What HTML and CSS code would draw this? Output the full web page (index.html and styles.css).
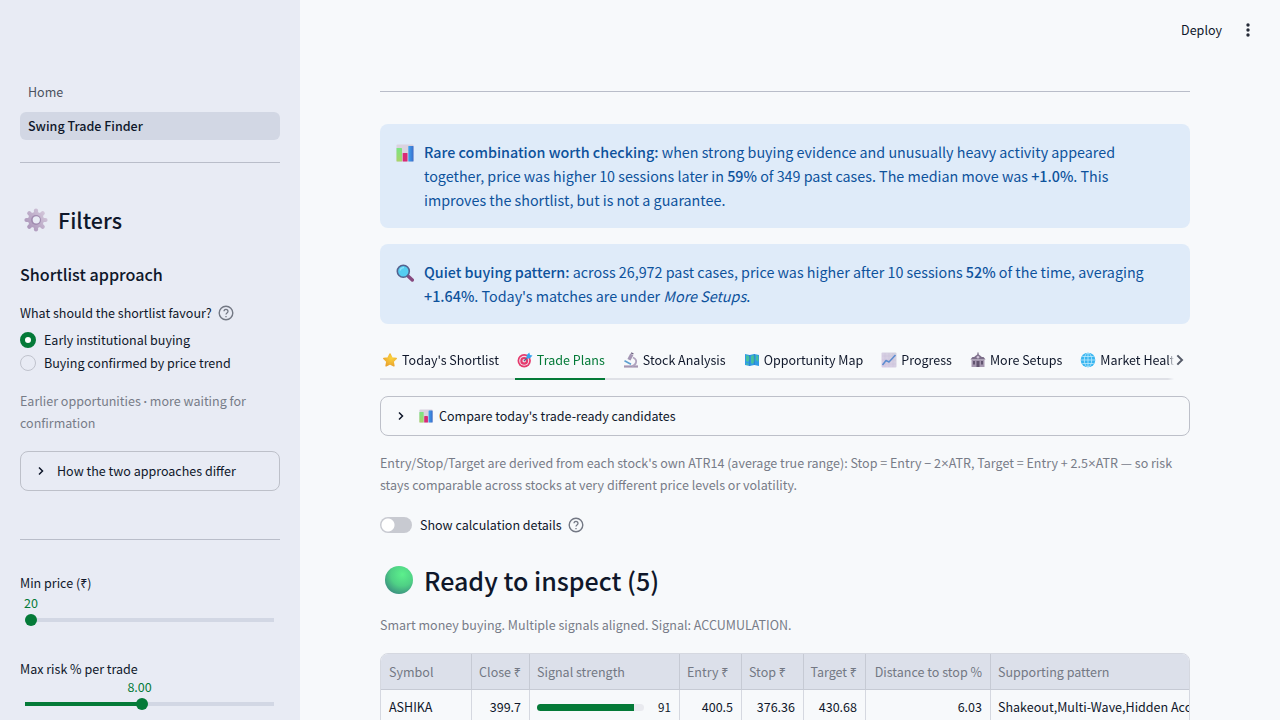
FILE: index.html
```html
<!DOCTYPE html>
<html lang="en">
<head>
<meta charset="utf-8">
<meta name="viewport" content="width=device-width, initial-scale=1">
<title>Swing Trade Finder</title>
<link rel="stylesheet" href="styles.css">
</head>
<body>
<svg class="defs" aria-hidden="true">
  <defs>
    <linearGradient id="bar-g" x1="0" y1="0" x2="0" y2="1"><stop offset="0" stop-color="#7ae582"/><stop offset="1" stop-color="#a9d46a"/></linearGradient>
    <linearGradient id="bar-b" x1="0" y1="0" x2="1" y2="0"><stop offset="0" stop-color="#3fa2f2"/><stop offset="1" stop-color="#3a6cc9"/></linearGradient>
    <radialGradient id="ball" cx=".62" cy=".3" r=".75"><stop offset="0" stop-color="#5cf08c"/><stop offset=".55" stop-color="#4fd085"/><stop offset="1" stop-color="#3b8f80"/></radialGradient>
    <radialGradient id="star-y" cx=".6" cy=".35" r=".7"><stop offset="0" stop-color="#fbd23c"/><stop offset="1" stop-color="#e9a32f"/></radialGradient>
    <linearGradient id="gear-p" gradientUnits="userSpaceOnUse" x1="2" y1="20" x2="21" y2="4"><stop offset="0" stop-color="#a993b8"/><stop offset="1" stop-color="#d3c7da"/></linearGradient>
    <linearGradient id="paper" x1="0" y1="1" x2="1" y2="0"><stop offset="0" stop-color="#d9cbe6"/><stop offset="1" stop-color="#d3d3df"/></linearGradient>
  </defs>
  <symbol id="chart" viewBox="0 0 18 18">
    <rect x=".5" y=".5" width="17" height="17" rx="1" fill="#dad2df"/>
    <rect x=".5" y="4" width="5.500" height="13.500" rx=".6" fill="url(#bar-g)"/>
    <rect x="6.700" y="9" width="4.800" height="8.500" rx=".6" fill="#d82a75"/>
    <rect x="12.300" y="2" width="5.200" height="15.500" rx=".6" fill="url(#bar-b)"/>
  </symbol>
  <symbol id="glass" viewBox="0 0 18 18">
    <path d="M12 12l4.300 4" stroke="#87497f" stroke-width="3.400" stroke-linecap="round"/>
    <circle cx="7.300" cy="7.300" r="6" fill="#55cdf1" stroke="#55628f" stroke-width="1.600"/>
    <path d="M4 6.500Q5 3.600 8 3.700" stroke="#8ce3fa" stroke-width="1.200" fill="none"/>
  </symbol>
  <symbol id="star" viewBox="0 0 16 16">
    <path d="M8 2l1.900 3.900 4.300.6-3.100 3 .8 4.300L8 11.800l-3.900 2 .8-4.300-3.100-3 4.300-.6z" fill="url(#star-y)" stroke="url(#star-y)" stroke-width="1.500" stroke-linejoin="round"/>
  </symbol>
  <symbol id="target" viewBox="0 0 16 16">
    <circle cx="7.200" cy="8.800" r="6.700" fill="#e5396c"/>
    <circle cx="7.200" cy="8.800" r="5" fill="#f0dfe9"/>
    <circle cx="7.200" cy="8.800" r="3.900" fill="#e5396c"/>
    <circle cx="7.200" cy="8.800" r="1.800" fill="#f0dfe9"/>
    <path d="M7 9l5-5" stroke="#56618b" stroke-width="1.200"/>
    <path d="M9.500 6.500l.3-3.500 2.500-2.500.7 2.500 2.500.5L13 6.200z" fill="#35a4ef"/>
  </symbol>
  <symbol id="microscope" viewBox="0 0 16 16">
    <path d="M1 14.500h14" stroke="#a596b3" stroke-width="2.200"/>
    <path d="M10 5.500q4 2 3 5Q12.400 13 9 14.300" fill="none" stroke="#b0a3bf" stroke-width="1.800"/>
    <path d="M8.800 2.400L6 7.800" stroke="#a496b4" stroke-width="3.500"/>
    <path d="M9 2l.6-1.200" stroke="#6d6080" stroke-width="2.600"/>
    <path d="M1.500 8.800l6.500 3.400" stroke="#5d9fd0" stroke-width="1.600"/>
  </symbol>
  <symbol id="map" viewBox="0 0 16 16">
    <path d="M1 2l4.700 1L10.300 2l4.700 1v11l-4.700-1-4.600 1L1 13z" fill="#2f9be6"/>
    <path d="M2 3l3 1 1 3-2 3-2-1zm5 1l3-1 1 5-2 4-2-1zM12 3l2.300 1v6L12 8zM2 11l3 1-1 1-2-.5z" fill="#45c0a0"/>
    <path d="M5.700 3v11M10.300 2v11" stroke="#2677bd" stroke-width=".6"/>
  </symbol>
  <symbol id="progress" viewBox="0 0 16 16">
    <rect x=".5" y=".5" width="15" height="15" rx="1" fill="url(#paper)"/>
    <path d="M4 1v14M8 1v14M12 1v14M1 4h14M1 8h14M1 12h14" stroke="#cabfd9" stroke-width=".5"/>
    <path d="M1.500 13l3.500-4.500 3 1.500L14.500 3" fill="none" stroke="#5b8cd0" stroke-width="1.500" stroke-linejoin="round"/>
  </symbol>
  <symbol id="house" viewBox="0 0 16 16">
    <path d="M8 .5v3" stroke="#5e536c" stroke-width="1"/>
    <path d="M4.500 4.500L8 2l3.500 2.500V7h-7z" fill="#837490"/>
    <path d="M.5 7.500L2.500 5h11l2 2.500z" fill="#7b6d88"/>
    <path d="M1.500 7.500h13V15h-13z" fill="#a496af"/>
    <path d="M3 9h2v3.500H3zM11 9h2v3.500h-2zM6.500 9h3v6h-3z" fill="#625470"/>
    <circle cx="8" cy="5.300" r="1.300" fill="#cfc3d7"/>
  </symbol>
  <symbol id="globe" viewBox="0 0 16 16">
    <circle cx="8" cy="8" r="7.300" fill="#38b5f0"/>
    <g fill="none" stroke="#bdeafd" stroke-width=".8"><path d="M8 1v14M1 8h14M2.300 4.500h11.400M2.300 11.500h11.400"/><ellipse cx="8" cy="8" rx="3.700" ry="7"/></g>
  </symbol>
  <symbol id="gear" viewBox="0 0 24 24">
    <g stroke="url(#gear-p)" stroke-width="4.200" stroke-linecap="round"><path d="M12 2.500v19"/><path d="M2.500 12h19"/><path d="M5.300 5.300l13.400 13.400"/><path d="M18.700 5.300L5.300 18.700"/></g>
    <circle cx="12" cy="12" r="8" fill="url(#gear-p)"/>
    <circle cx="12" cy="12" r="5" fill="#a18cb0"/>
    <circle cx="12.300" cy="11.800" r="3.600" fill="#e9ecf5"/>
  </symbol>
  <symbol id="help" viewBox="0 0 16 16">
    <circle cx="8" cy="8" r="6.800" fill="none" stroke="#737884" stroke-width="1.400"/>
    <path d="M6 6.300a2 1.900 0 1 1 3.200 1.500C8.400 8.400 8 8.700 8 9.600M8 11v1.300" fill="none" stroke="#737884" stroke-width="1.300"/>
  </symbol>
  <symbol id="chevron" viewBox="0 0 12 12">
    <path d="M4 2.500L7.500 6 4 9.500" fill="none" stroke="currentColor" stroke-width="1.500"/>
  </symbol>
</svg>

<div class="app">
  <aside class="sidebar">
    <nav class="nav">
      <a class="nav-link" href="#home">Home</a>
      <a class="nav-link active" href="#finder" aria-current="page">Swing Trade Finder</a>
    </nav>
    <hr class="rule">
    <h2 class="filters"><svg class="gear"><use href="#gear"/></svg>Filters</h2>
    <h3 class="subhead">Shortlist approach</h3>
    <fieldset class="choices">
      <legend class="label">What should the shortlist favour?<svg class="help"><use href="#help"/></svg></legend>
      <label class="choice"><input class="radio" type="radio" name="approach" checked>Early institutional buying</label>
      <label class="choice"><input class="radio" type="radio" name="approach">Buying confirmed by price trend</label>
    </fieldset>
    <p class="caption note">Earlier opportunities <span class="symbol">·</span> more waiting for confirmation</p>
    <button class="expander" type="button" aria-expanded="false"><svg class="chev"><use href="#chevron"/></svg>How the two approaches differ</button>
    <hr class="rule lower">
    <div class="slider">
      <label for="min-price">Min price (₹)</label>
      <output class="value start" for="min-price">20</output>
      <input class="range" id="min-price" type="range" min="20" max="5000" value="20">
    </div>
    <div class="slider" style="--fill:46%">
      <label for="max-risk">Max risk % per trade</label>
      <output class="value" for="max-risk">8.00</output>
      <input class="range" id="max-risk" type="range" min="1" max="16" step="0.1" value="8">
    </div>
  </aside>

  <div class="page">
    <header class="toolbar">
      <button class="deploy" type="button">Deploy</button>
      <button class="more" type="button" aria-label="Menu"><svg class="dots" viewBox="0 0 16 16"><circle cx="8" cy="3" r="1.700"/><circle cx="8" cy="8" r="1.700"/><circle cx="8" cy="13" r="1.700"/></svg></button>
    </header>
    <main class="main">
      <hr class="rule top">
      <div class="alert"><svg class="alert-icon"><use href="#chart"/></svg>
        <p class="alert-text"><strong>Rare combination worth checking:</strong> when strong buying evidence and unusually heavy activity appeared together, price was higher 10 sessions later in <strong>59%</strong> of 349 past cases. The median move was <strong>+1.0%</strong>. This improves the shortlist, but is not a guarantee.</p></div>
      <div class="alert"><svg class="alert-icon"><use href="#glass"/></svg>
        <p class="alert-text"><strong>Quiet buying pattern:</strong> across 26,972 past cases, price was higher after 10 sessions <strong>52%</strong> of the time, averaging <strong>+1.64%</strong>. Today's matches are under <em>More Setups</em>.</p></div>

      <div class="tabbar">
        <div class="tabs" role="tablist">
          <button class="tab" type="button" role="tab"><svg class="tab-icon"><use href="#star"/></svg>Today's Shortlist</button>
          <button class="tab selected" type="button" role="tab" aria-selected="true"><svg class="tab-icon"><use href="#target"/></svg>Trade Plans</button>
          <button class="tab" type="button" role="tab"><svg class="tab-icon"><use href="#microscope"/></svg>Stock Analysis</button>
          <button class="tab" type="button" role="tab"><svg class="tab-icon"><use href="#map"/></svg>Opportunity Map</button>
          <button class="tab" type="button" role="tab"><svg class="tab-icon"><use href="#progress"/></svg>Progress</button>
          <button class="tab" type="button" role="tab"><svg class="tab-icon"><use href="#house"/></svg>More Setups</button>
          <button class="tab" type="button" role="tab"><svg class="tab-icon"><use href="#globe"/></svg>Market Health</button>
        </div>
        <button class="scroll" type="button" aria-label="Scroll tabs right"><svg class="scroll-icon"><use href="#chevron"/></svg></button>
      </div>

      <button class="expander" type="button" aria-expanded="false"><svg class="chev"><use href="#chevron"/></svg><span class="with-icon"><svg class="small-icon"><use href="#chart"/></svg>Compare today's trade-ready candidates</span></button>
      <p class="caption">Entry/Stop/Target are derived from each stock's own ATR14 (average true range): Stop = Entry − 2<span class="symbol">×</span>ATR, Target = Entry + 2.5<span class="symbol">×</span>ATR — so risk stays comparable across stocks at very different price levels or volatility.</p>
      <div class="toggle-row">
        <label class="toggle-label"><input class="toggle" type="checkbox" role="switch">Show calculation details</label><svg class="help"><use href="#help"/></svg>
      </div>
      <h2 class="ready"><svg class="ball" viewBox="0 0 28 28"><circle cx="14" cy="14" r="14" fill="url(#ball)"/></svg>Ready to inspect (5)</h2>
      <p class="caption">Smart money buying. Multiple signals aligned. Signal: ACCUMULATION.</p>
      <div class="table-wrap">
        <table class="table">
          <colgroup><col class="c-symbol"><col class="c-close"><col class="c-signal"><col class="c-price"><col class="c-price"><col class="c-price"><col class="c-distance"><col></colgroup>
          <thead><tr><th>Symbol</th><th class="num">Close ₹</th><th>Signal strength</th><th>Entry ₹</th><th>Stop ₹</th><th class="num">Target ₹</th><th class="num">Distance to stop %</th><th>Supporting pattern</th></tr></thead>
          <tbody><tr><td>ASHIKA</td><td class="num">399.7</td><td><div class="strength"><div class="track"><div class="fill" style="width:91%"></div></div><span class="score">91</span></div></td><td class="num">400.5</td><td class="num">376.36</td><td class="num">430.68</td><td class="num">6.03</td><td>Shakeout,Multi-Wave,Hidden Accumulation</td></tr></tbody>
        </table>
      </div>
    </main>
  </div>
</div>
</body>
</html>
```
FILE: styles.css
```css
*, *::before, *::after { box-sizing: border-box; }
body {
  margin: 0;
  height: 100vh;
  overflow: hidden;
  background: #f7f9fb;
  color: #0f172a;
  font-family: "Noto Sans CJK SC", "Noto Sans", sans-serif;
  font-size: 14px;
  line-height: 22px;
  font-size-adjust: 0.486;
}
button, input { font: inherit; font-size-adjust: inherit; color: inherit; }
button { margin: 0; padding: 0; border: 0; background: none; cursor: pointer; }
h2, h3, p { margin: 0; }
.defs { position: absolute; width: 0; height: 0; }
.symbol { font-family: Lato, "Noto Sans", sans-serif; }
.app { display: flex; height: 100vh; }
.sidebar { flex: 0 0 300px; padding: 78px 20px 0; background: #e8ebf4; overflow: hidden; }
.nav { display: flex; flex-direction: column; gap: 6px; }
.nav-link { padding: 3px 8px; border-radius: 6px; color: #4b5260; text-decoration: none; }
.nav-link.active { background: #d2d7e4; color: #0f172a; font-weight: 500; }
.rule { height: 1px; margin: 22px 0 0; border: 0; background: #b9bdc9; }
.filters { display: flex; align-items: center; gap: 10px; margin-top: 39px; padding-left: 4px; font-size: 24px; line-height: 36px; font-weight: 500; }
.gear { width: 24px; height: 24px; }
.subhead { margin-top: 24px; font-size: 18px; line-height: 24px; font-weight: 500; }
.choices { margin: 16px 0 0; padding: 0; border: 0; }
.label { display: flex; align-items: center; gap: 6px; padding: 0; margin-bottom: 5px; }
.help { width: 16px; height: 16px; flex: none; }
.choice { display: flex; align-items: center; gap: 8px; line-height: 22px; }
.choice + .choice { margin-top: 1px; }
.radio { appearance: none; width: 16px; height: 16px; margin: 0; border: 1px solid #c0c3cd; border-radius: 50%; }
.radio:checked { border: 5px solid #047a38; background: #fff; }
.caption { color: #777c88; line-height: 22px; }
.note { margin: 16px 0 17px; }
.expander { display: flex; align-items: center; gap: 10px; width: 100%; height: 40px; padding: 0 14px; border: 1px solid #bdc0c9; border-radius: 8px; text-align: left; }
.chev { width: 12px; height: 12px; }
.lower { margin-top: 48px; margin-bottom: 32px; }
.slider { display: flex; flex-direction: column; padding: 0 0 30px; }
.value { align-self: flex-start; width: 30px; margin: -2px 0 0 calc(var(--fill) - 15px); line-height: 18px; text-align: center; color: #047a38; }
.value.start { width: 22px; margin-left: 0; }
.slider .range { appearance: none; align-self: stretch; height: 16px; margin: 0 6px 0 5px; background: linear-gradient(#047a38, #047a38) 0 6px / var(--fill, 0%) 4px no-repeat, linear-gradient(#d2d7e4, #d2d7e4) 0 6px / 100% 4px no-repeat; }
.range::-webkit-slider-thumb { appearance: none; width: 12px; height: 12px; border-radius: 50%; background: #047a38; }
.page { flex: 1; min-width: 0; display: flex; flex-direction: column; }
.toolbar { display: flex; align-items: center; justify-content: flex-end; gap: 18px; flex: 0 0 60px; padding-right: 24px; }
.more { display: flex; }
.dots { width: 16px; height: 16px; fill: #262c38; }
.main { display: flex; flex-direction: column; gap: 16px; padding: 31px 90px 0 80px; min-height: 0; }
.main > * { flex: none; }
.top { margin: 0 0 16px; }
.alert { display: flex; gap: 10px; padding: 16px 24px 16px 16px; border-radius: 8px; background: #dfebf9; color: #0d529c; font-size: 16px; line-height: 24px; }
.alert-icon { flex: none; width: 18px; height: 18px; margin-top: 4px; }
.alert-text strong { font-weight: 500; }
.tabbar { display: grid; grid-template-columns: minmax(0, 1fr) 16px; height: 40px; }
.tabs { display: flex; gap: 16px; overflow: hidden; background: linear-gradient(#dfe1e7, #dfe1e7) bottom / 100% 2px no-repeat; mask-image: linear-gradient(to right, #000 calc(100% - 6px), transparent 100%); }
.tab { display: flex; flex: none; align-items: center; gap: 4px; padding-left: 2px; white-space: nowrap; }
.tab.selected { color: #047a38; box-shadow: inset 0 -2px #047a38; }
.tab-icon { width: 16px; height: 16px; }
.scroll { display: flex; align-items: center; color: #555b68; }
.scroll-icon { flex: none; width: 16px; height: 16px; margin-left: -2px; }
.with-icon { display: flex; align-items: center; gap: 6px; padding-left: 2px; }
.small-icon { width: 14px; height: 14px; }
.toggle-row { display: flex; align-items: center; gap: 6px; padding-top: 2px; }
.toggle-label { display: flex; align-items: center; gap: 8px; }
.toggle { appearance: none; width: 32px; height: 16px; margin: 0; border-radius: 8px; background: radial-gradient(circle at 8px 8px, #fff 6px, transparent 7px) #c8cad1; }
.ready { display: flex; align-items: center; gap: 11px; padding: 11px 0 1px 5px; font-size: 28px; line-height: 34px; font-weight: 500; }
.ball { width: 28px; height: 28px; }
.table-wrap { margin-top: 1px; border: 1px solid #d5d8e0; border-radius: 8px 8px 0 0; overflow: hidden; }
.table { width: 100%; border-collapse: separate; border-spacing: 0; table-layout: fixed; }
.c-symbol { width: 91px; }
.c-close { width: 58px; }
.c-signal { width: 150px; }
.c-price { width: 62px; }
.c-distance { width: 125px; }
.table th, .table td { height: 35px; padding: 0 8px 0 7px; overflow: hidden; white-space: nowrap; text-align: left; font-weight: 400; border-right: 1px solid #d5d8e0; border-bottom: 1px solid #d5d8e0; }
.table th { height: 36px; background: #dce0ea; color: #737884; border-color: #c6cad4; }
.table th:first-child, .table td:first-child { padding-left: 8px; }
.table th:last-child, .table td:last-child { border-right: 0; padding-right: 0; }
.table .num { padding-left: 0; text-align: right; }
.strength { display: flex; align-items: center; gap: 14px; }
.track { flex: 1; height: 7px; border-radius: 4px; background: #e9eaef; overflow: hidden; }
.fill { height: 100%; background: #047a38; }
.score { font-size: 13px; }
```
